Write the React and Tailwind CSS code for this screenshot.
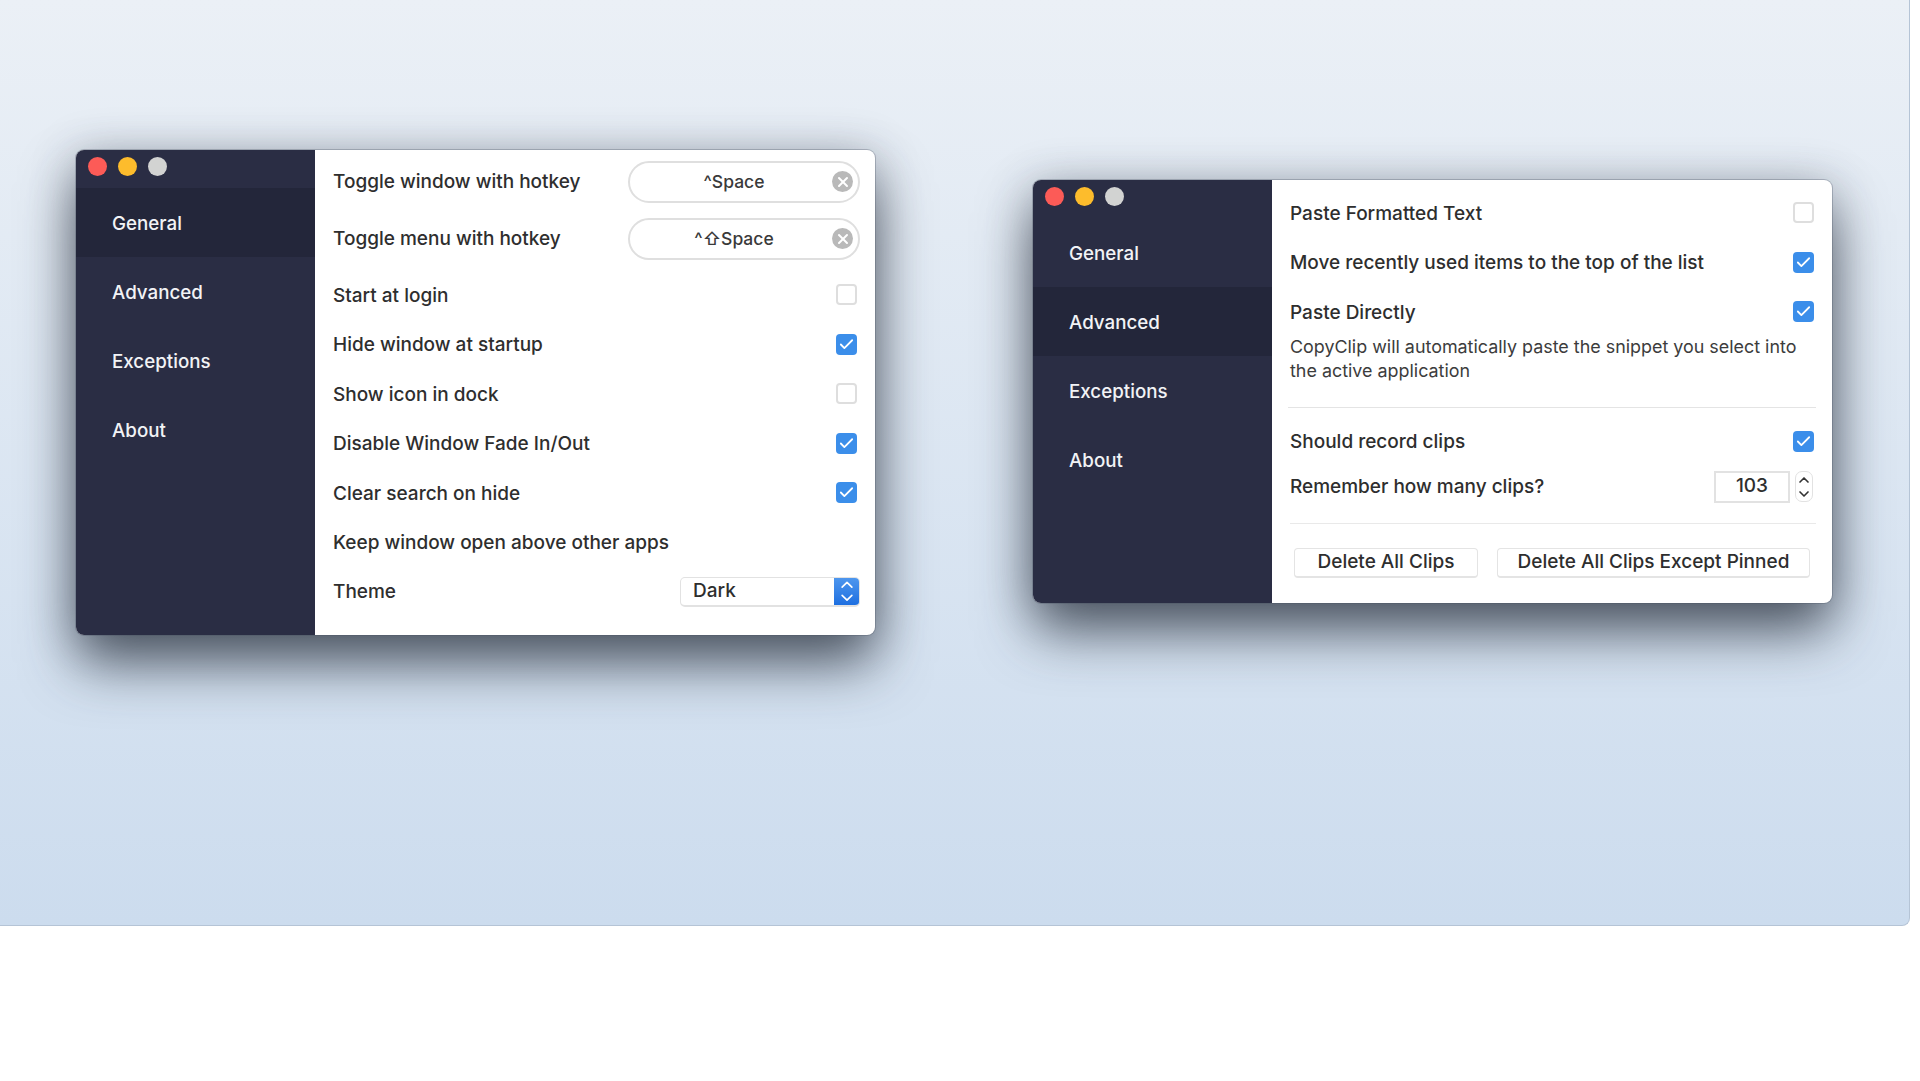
import React from 'react';
import { ChevronUp, ChevronDown, X, Check } from 'lucide-react';

const NAV = ['General', 'Advanced', 'Exceptions', 'About'];

function Sidebar({ active }) {
    return (
        <div className="w-[239px] shrink-0 bg-[#2a2d44] rounded-l-[8px]">
            {/* Traffic lights */}
            <div className="h-[38px] flex items-start gap-[11px] pl-[12px] pt-[7px]">
                <span className="w-[19px] h-[19px] rounded-full bg-[#fc5b57]" />
                <span className="w-[19px] h-[19px] rounded-full bg-[#fdbc2c]" />
                <span className="w-[19px] h-[19px] rounded-full bg-[#d2d3d2]" />
            </div>
            {NAV.map((item) => (
                <div
                    key={item}
                    className={`h-[69px] flex items-center pl-[36px] pt-[4px] text-[18.75px] font-medium text-[#f2f3f6] ${item === active ? 'bg-[#23263a]' : ''}`}
                >
                    {item}
                </div>
            ))}
        </div>
    );
}

function Checkbox({ checked }) {
    if (checked) {
        return (
            <span className="w-[21px] h-[21px] rounded-[4px] bg-[#3b8eea] flex items-center justify-center">
                <Check size={17} strokeWidth={2.5} className="text-white" />
            </span>
        );
    }
    return <span className="w-[21px] h-[21px] rounded-[4px] border-2 border-[#dedede] bg-white" />;
}

function Row({ label, checked }) {
    return (
        <div className="h-[49.5px] flex items-center justify-between pr-[18px]">
            <span className="pt-[2px]">{label}</span>
            {checked !== undefined && <Checkbox checked={checked} />}
        </div>
    );
}

function HotkeyRow({ label, hotkey }) {
    return (
        <div className="h-[42px] flex items-center justify-between pr-[15px]">
            <span className="pt-[1px]">{label}</span>
            <div className="relative w-[232px] h-[42px] rounded-full border-2 border-[#dfdfdf] flex items-center justify-center pr-[20px] text-[17.5px] text-[#3a3a3a]">
                <span className="pt-[1px] [font-family:Inter,'DejaVu_Sans',sans-serif]">{hotkey}</span>
                <span className="absolute right-[5px] top-[8px] w-[21px] h-[21px] rounded-full bg-[#b9b9b9] flex items-center justify-center">
                    <X size={16} strokeWidth={3} className="text-white" />
                </span>
            </div>
        </div>
    );
}

function GeneralWindow() {
    return (
        <div className="w-[799px] h-[485px] flex rounded-[8px] bg-white shadow-[0_0_0_1px_rgba(70,80,95,0.3),0_30px_55px_-2px_rgba(40,48,60,0.75),0_4px_45px_rgba(50,60,80,0.3)]">
            <Sidebar active="General" />
            <div className="flex-1 pl-[18px] pt-[11px] text-[19px] font-medium text-[#2e2e2e]">
                <HotkeyRow label="Toggle window with hotkey" hotkey="^Space" />
                <div className="mt-[15px]">
                    <HotkeyRow label="Toggle menu with hotkey" hotkey="^⇧Space" />
                </div>
                <div className="mt-[10px]">
                    <Row label="Start at login" checked={false} />
                    <Row label="Hide window at startup" checked={true} />
                    <Row label="Show icon in dock" checked={false} />
                    <Row label="Disable Window Fade In/Out" checked={true} />
                    <Row label="Clear search on hide" checked={true} />
                    <Row label="Keep window open above other apps" />
                </div>
                <div className="h-[49.5px] flex items-center justify-between pr-[15px]">
                    <span>Theme</span>
                    <div className="w-[180px] h-[30px] flex rounded-[5px] border border-[#e2e2e2] border-b-2 overflow-hidden">
                        <span className="flex-1 pl-[12px] flex items-center">Dark</span>
                        <span className="w-[25px] bg-linear-to-b from-[#4d96ee] to-[#1d6fe0] flex flex-col items-center justify-center">
                            <ChevronUp size={20} strokeWidth={2} className="text-white -my-[3px]" />
                            <ChevronDown size={20} strokeWidth={2} className="text-white -my-[3px]" />
                        </span>
                    </div>
                </div>
            </div>
        </div>
    );
}

function AdvancedWindow() {
    return (
        <div className="w-[799px] h-[423px] flex rounded-[8px] bg-white shadow-[0_0_0_1px_rgba(70,80,95,0.3),0_30px_55px_-2px_rgba(40,48,60,0.75),0_4px_45px_rgba(50,60,80,0.3)]">
            <Sidebar active="Advanced" />
            <div className="flex-1 pl-[18px] pt-[8px] text-[19px] font-medium text-[#2e2e2e]">
                <Row label="Paste Formatted Text" checked={false} />
                <Row label="Move recently used items to the top of the list" checked={true} />
                <Row label="Paste Directly" checked={true} />
                <p className="-mt-[2px] text-[17.9px] font-normal leading-[24.5px] text-[#3c3c3c] w-[530px]">
                    CopyClip will automatically paste the snippet you select into the active application
                </p>
                <div className="mt-[23px] -ml-[2px] mr-[16px] border-t border-[#e4e4e4]" />
                <div className="mt-[14px] h-[40px] flex items-center justify-between pr-[18px]">
                    <span className="pt-[2px]">Should record clips</span>
                    <Checkbox checked={true} />
                </div>
                <div className="mt-[5px] h-[40px] flex items-center justify-between pr-[19px]">
                    <span className="pt-[2px]">Remember how many clips?</span>
                    <div className="flex items-center gap-[5px]">
                        <span className="w-[76px] h-[32px] border-2 border-[#e2e2e2] flex items-center justify-center">103</span>
                        <span className="w-[18px] h-[31px] rounded-[7px] border border-[#e2e2e2] flex flex-col items-center justify-center text-[#333]">
                            <ChevronUp size={16} strokeWidth={2.5} className="-my-[1px]" />
                            <ChevronDown size={16} strokeWidth={2.5} className="-my-[1px]" />
                        </span>
                    </div>
                </div>
                <div className="mt-[16px] mr-[16px] border-t border-[#e9e9e9]" />
                <div className="mt-[24px] ml-[4px] flex gap-[19px]">
                    <button className="w-[184px] h-[30px] rounded-[4px] border border-[#e4e4e4] border-b-2 bg-white flex items-center justify-center pt-[1px]">
                        Delete All Clips
                    </button>
                    <button className="w-[313px] h-[30px] rounded-[4px] border border-[#e4e4e4] border-b-2 bg-white flex items-center justify-center pt-[1px]">
                        Delete All Clips Except Pinned
                    </button>
                </div>
            </div>
        </div>
    );
}

export default function App() {
    return (
        <div className="min-h-[1081px] bg-white [font-family:Inter,'Liberation_Sans',sans-serif]">
            <div className="w-[1910px] h-[926px] rounded-br-[8px] border-r border-b border-[#b5c4d6] bg-linear-to-b from-[#ebf0f6] to-[#ccdcee] pl-[76px] pt-[150px] flex items-start gap-[158px]">
                <GeneralWindow />
                <div className="mt-[30px]">
                    <AdvancedWindow />
                </div>
            </div>
        </div>
    );
}
